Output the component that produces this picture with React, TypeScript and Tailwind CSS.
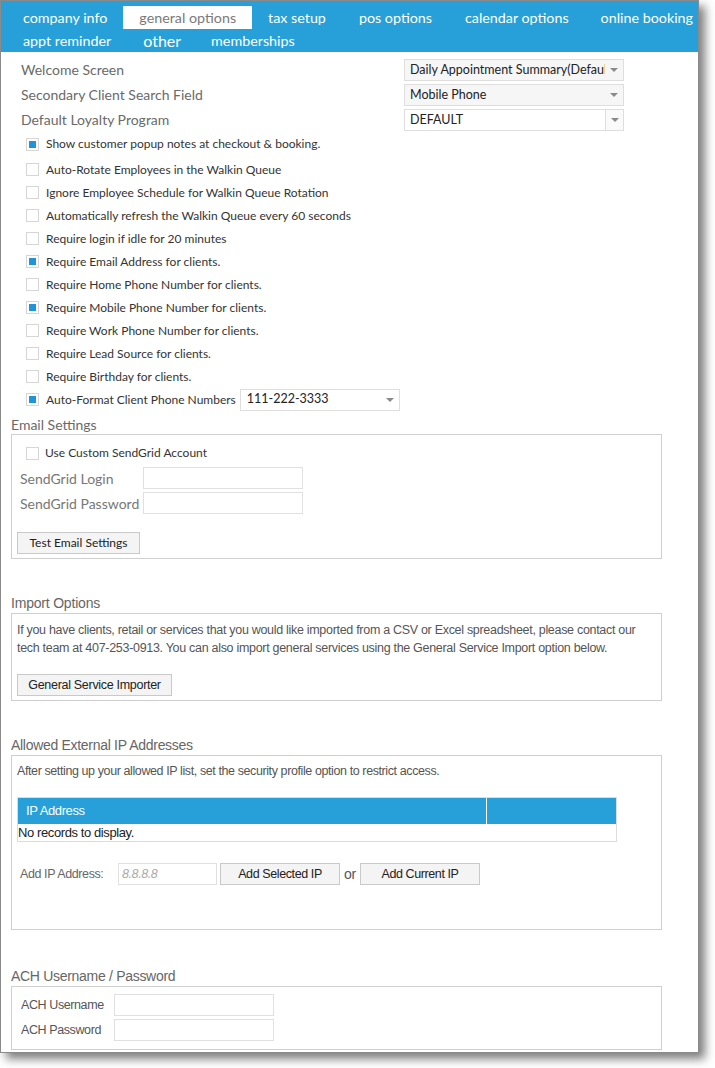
import React from "react";

const Arrow = () => (
  <span className="w-0 h-0 border-l-[4px] border-r-[4px] border-t-[4px] border-l-transparent border-r-transparent border-t-[#8a8a8a]" />
);

function Select({ text, plain }: { text: string; plain?: boolean }) {
  if (plain) {
    return (
      <div className="w-[220px] h-[22px] border border-[#dedede] bg-white flex items-stretch text-[12.5px] text-[#222]">
        <div className="flex-1 flex items-center pl-[5px] overflow-hidden whitespace-nowrap">{text}</div>
        <div className="w-[18px] border-l border-[#dedede] flex items-center justify-center bg-[#fafafa]">
          <Arrow />
        </div>
      </div>
    );
  }
  return (
    <div className="w-[220px] h-[22px] border border-[#dedede] bg-[#f6f6f6] flex items-center text-[12.5px] text-[#222]">
      <div className="flex-1 pl-[5px] overflow-hidden whitespace-nowrap">{text}</div>
      <div className="w-[18px] flex items-center justify-center">
        <Arrow />
      </div>
    </div>
  );
}

function Check({ checked }: { checked?: boolean }) {
  return (
    <span className="w-[13px] h-[13px] border border-[#d6d6d6] bg-white flex items-center justify-center shrink-0">
      {checked && <span className="w-[7px] h-[7px] bg-[#1f94d8]" />}
    </span>
  );
}

const checks: [string, boolean][] = [
  ["Auto-Rotate Employees in the Walkin Queue", false],
  ["Ignore Employee Schedule for Walkin Queue Rotation", false],
  ["Automatically refresh the Walkin Queue every 60 seconds", false],
  ["Require login if idle for 20 minutes", false],
  ["Require Email Address for clients.", true],
  ["Require Home Phone Number for clients.", false],
  ["Require Mobile Phone Number for clients.", true],
  ["Require Work Phone Number for clients.", false],
  ["Require Lead Source for clients.", false],
  ["Require Birthday for clients.", false],
];

const Btn = ({ children, w }: { children: React.ReactNode; w: string }) => (
  <button className={`${w} h-[22px] border border-[#c9c9c9] bg-[#f4f4f4] text-[#222] flex items-center justify-center`}>
    {children}
  </button>
);

export default function App() {
  const narrow = "font-['Liberation_Sans',sans-serif]";
  return (
    <div className="min-h-screen bg-white font-['Lato','Open_Sans',sans-serif]">
      <div className="w-[699px] border border-[#8a8a8a] bg-white shadow-[6px_6px_9px_rgba(0,0,0,0.5)]">
        {/* header tabs */}
        <div className="bg-[#27a0da] h-[51px] pt-[5px] pl-[6px] text-white text-[14.3px] overflow-hidden">
          <div className="flex h-[23px] items-center whitespace-nowrap">
            <div className="px-[16px] h-full flex items-center">company info</div>
            <div className="px-[16px] h-full flex items-center bg-white text-[#7a7a7a]">general options</div>
            <div className="px-[16px] h-full flex items-center">tax setup</div>
            <div className="px-[17px] h-full flex items-center">pos options</div>
            <div className="px-[16px] h-full flex items-center">calendar options</div>
            <div className="px-[16px] h-full flex items-center">online booking</div>
          </div>
          <div className="flex h-[23px] items-center whitespace-nowrap">
            <div className="px-[16px] h-full flex items-center">appt reminder</div>
            <div className="px-[16px] h-full flex items-center text-[16px]">other</div>
            <div className="px-[14px] h-full flex items-center">memberships</div>
          </div>
        </div>

        {/* top settings */}
        <div className="pt-[7px] pl-[20px] flex flex-col gap-[3px]">
          {[
            ["Welcome Screen", "Daily Appointment Summary(Default)", false],
            ["Secondary Client Search Field", "Mobile Phone", false],
            ["Default Loyalty Program", "DEFAULT", true],
          ].map(([l, v, p]) => (
            <div key={l as string} className="flex items-center h-[22px]">
              <div className="w-[383px] text-[14px] text-[#6a6a6a] pb-[2px]">{l as string}</div>
              <Select text={v as string} plain={p as boolean} />
            </div>
          ))}
        </div>

        <div className="pl-[25px] mt-[1px] text-[12px] text-[#333]">
          <div className="flex items-center gap-[7px] h-[24px]">
            <Check checked />
            <span>Show customer popup notes at checkout &amp; booking.</span>
          </div>
          <div className="h-[2px]" />
          {checks.map(([t, c]) => (
            <div key={t} className="flex items-center gap-[7px] h-[23px]">
              <Check checked={c} />
              <span>{t}</span>
            </div>
          ))}
          <div className="flex items-center h-[23px]">
            <Check checked />
            <span className="ml-[7px] whitespace-nowrap">Auto-Format Client Phone Numbers</span>
            <div className="ml-[4px] w-[160px] h-[22px] border border-[#dedede] bg-white flex items-center text-[12.5px] text-[#222]">
              <div className="flex-1 pl-[6px]">111-222-3333</div>
              <div className="w-[18px] flex items-center justify-center">
                <Arrow />
              </div>
            </div>
          </div>
        </div>

        {/* Email settings */}
        <div className="px-[10px] mt-[4px]">
          <div className="text-[14px] text-[#6a6a6a] h-[19px] leading-[19px]">Email Settings</div>
          <div className="w-[651px] h-[125px] border border-[#cfcfcf] pt-[11px]">
            <div className="pl-[14px] flex items-center gap-[6px] h-[14px] text-[12px] text-[#333]">
              <Check />
              <span>Use Custom SendGrid Account</span>
            </div>
            <div className="pl-[8px] mt-[7px] flex flex-col gap-[3px]">
              {["SendGrid Login", "SendGrid Password"].map((l) => (
                <div key={l} className="flex items-center h-[22px]">
                  <div className="w-[123px] text-[14px] text-[#777]">{l}</div>
                  <div className="w-[160px] h-[22px] border border-[#e0e0e0] bg-white" />
                </div>
              ))}
            </div>
            <div className="pl-[5px] mt-[18px] text-[12px]">
              <Btn w="w-[123px]">Test Email Settings</Btn>
            </div>
          </div>
        </div>

        {/* Import Options */}
        <div className={`px-[10px] mt-[35px] ${narrow}`}>
          <div className="text-[14px] tracking-[-0.2px] text-[#666] h-[19px] leading-[19px]">Import Options</div>
          <div className="w-[651px] h-[88px] border border-[#cfcfcf] pt-[7px] pl-[5px] tracking-[-0.3px]">
            <p className="text-[12.5px] leading-[18px] text-[#555]">
              If you have clients, retail or services that you would like imported from a CSV or Excel spreadsheet, please contact our tech team at 407-253-0913. You can also import general services using the General Service Import option below.
            </p>
            <div className="mt-[17px] text-[12.5px]">
              <Btn w="w-[155px]">General Service Importer</Btn>
            </div>
          </div>
        </div>

        {/* Allowed IPs */}
        <div className={`px-[10px] mt-[35px] ${narrow}`}>
          <div className="text-[14px] tracking-[-0.3px] text-[#666] h-[19px] leading-[19px]">Allowed External IP Addresses</div>
          <div className="w-[651px] h-[175px] border border-[#cfcfcf] pt-[6px] pl-[5px] tracking-[-0.4px]">
            <p className="text-[12.5px] leading-[18px] text-[#555]">
              After setting up your allowed IP list, set the security profile option to restrict access.
            </p>
            <div className="mt-[17px] w-[600px] border border-[#dcdcdc]">
              <div className="flex h-[26px] bg-[#27a0da] text-white text-[13px]">
                <div className="w-[469px] border-r border-white flex items-center pl-[8px]">IP Address</div>
                <div className="flex-1" />
              </div>
              <div className="h-[17px] flex items-center text-[13px] text-[#222]">No records to display.</div>
            </div>
            <div className="mt-[21px] flex items-center text-[12.5px]">
              <div className="w-[101px] pl-[3px] text-[#666]">Add IP Address:</div>
              <div className="w-[99px] h-[22px] border border-[#e0e0e0] bg-white flex items-center pl-[3px] italic text-[#aaa]">8.8.8.8</div>
              <div className="ml-[3px]">
                <Btn w="w-[120px]">Add Selected IP</Btn>
              </div>
              <span className="ml-[4px] w-[16px] text-[14px] text-[#555]">or</span>
              <Btn w="w-[120px]">Add Current IP</Btn>
            </div>
          </div>
        </div>

        {/* ACH */}
        <div className={`px-[10px] mt-[36px] pb-[2px] ${narrow}`}>
          <div className="text-[14px] tracking-[-0.3px] text-[#666] h-[20px] leading-[20px]">ACH Username / Password</div>
          <div className="w-[651px] h-[64px] border border-[#cfcfcf] pt-[7px] pl-[8px] flex flex-col gap-[3px] tracking-[-0.4px]">
            {["ACH Username", "ACH Password"].map((l) => (
              <div key={l} className="flex items-center h-[22px] text-[12.5px] text-[#555]">
                <div className="w-[94px] pl-[1px]">{l}</div>
                <div className="w-[160px] h-[22px] border border-[#e0e0e0] bg-white" />
              </div>
            ))}
          </div>
        </div>
      </div>
    </div>
  );
}
